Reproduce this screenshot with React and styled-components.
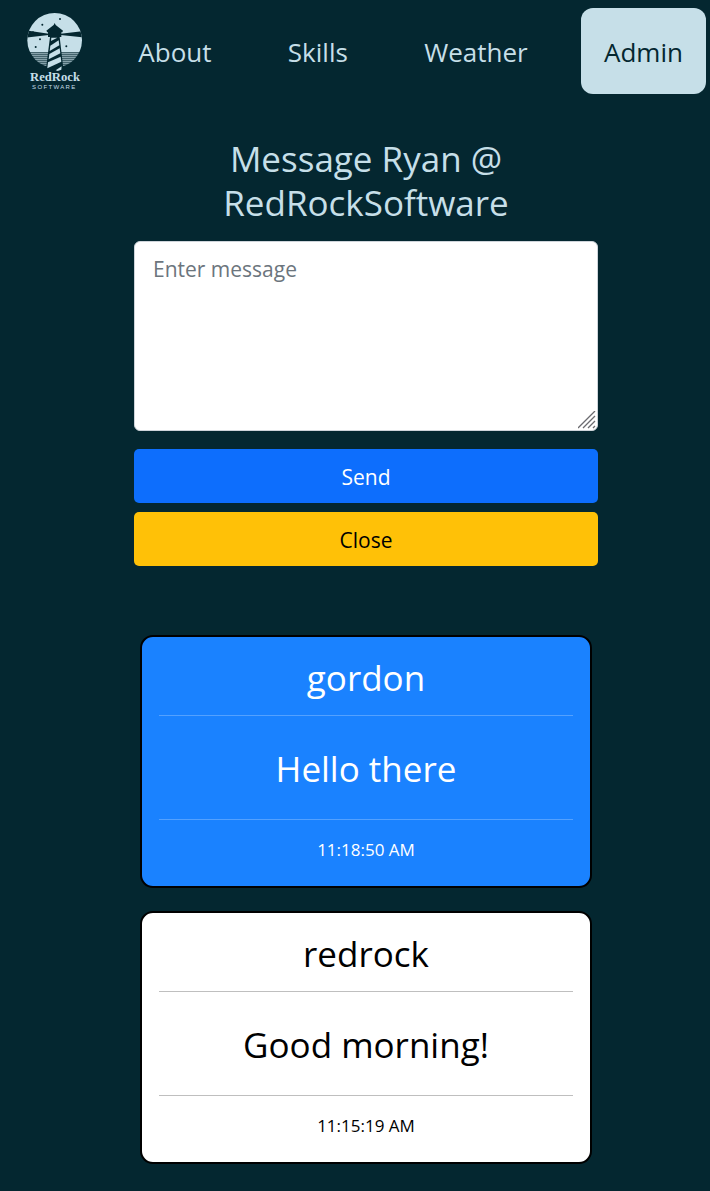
import React from "react";
import styled, { createGlobalStyle } from "styled-components";

const GlobalStyle = createGlobalStyle`
  *, *::before, *::after { box-sizing: border-box; }
  body {
    margin: 0;
    background: #042730;
    color: #c6dfe8;
    font-family: "Open Sans", "Noto Sans", sans-serif;
    font-size: 21px;
  }
`;

const NavBar = styled.nav`
  display: flex;
  align-items: center;
  justify-content: space-between;
  padding: 8px 4px 0 25px;
`;

const NavLink = styled.a`
  display: flex;
  align-items: center;
  height: 86px;
  padding: 2px 23px 0;
  border-radius: 12px;
  font-size: 26px;
  text-decoration: none;
  color: ${(p) => (p.$active ? "#042730" : "#c6dfe8")};
  background: ${(p) => (p.$active ? "#c6dfe8" : "transparent")};
`;

const LogoLink = styled.a`
  display: block;
  width: 60px;
  height: 86px;
`;

const LogoSvg = styled.svg`
  display: block;
  width: 60px;
  height: 86px;
`;

const Main = styled.main`
  padding: 43px 112px 27px 134px;
`;

const Title = styled.h1`
  margin: 0 0 16px;
  font-size: 35px;
  font-weight: 400;
  line-height: 44px;
  text-align: center;
`;

const Form = styled.form`
  display: flex;
  flex-direction: column;
`;

const MessageField = styled.div`
  position: relative;
  display: flex;
  margin-bottom: 18px;
`;

const MessageBox = styled.textarea`
  width: 100%;
  height: 190px;
  padding: 10px 18px;
  border: 1px solid #ced4da;
  border-radius: 6px;
  background: #fff;
  color: #212529;
  font-family: inherit;
  font-size: 21px;
  line-height: 34px;
  resize: none;
  &::placeholder { color: #6c757d; opacity: 1; }
`;

const Grip = styled.svg`
  position: absolute;
  right: 2px;
  bottom: 2px;
  width: 18px;
  height: 18px;
  pointer-events: none;
`;

const Button = styled.button`
  height: 54px;
  margin: 0 0 9px;
  padding: 2px 0 0;
  border: 0;
  border-radius: 5px;
  font-family: inherit;
  font-size: 21px;
  color: ${(p) => (p.$kind === "warning" ? "#000" : "#fff")};
  background: ${(p) => (p.$kind === "warning" ? "#ffc107" : "#0d6efd")};
`;

const Messages = styled.section`
  display: flex;
  flex-direction: column;
  gap: 23px;
  padding: 60px 6px 0;
`;

const Card = styled.article`
  padding: 19px 17px 22px;
  border: 2px solid #000;
  border-radius: 13px;
  text-align: center;
  color: ${(p) => (p.$own ? "#000" : "#fff")};
  background: ${(p) => (p.$own ? "#fff" : "#1a82ff")};
`;

const CardText = styled.p`
  margin: 0;
  font-size: 35px;
  line-height: 44px;
`;

const Rule = styled.hr`
  height: 1px;
  margin: ${(p) => (p.$footer ? "28px 0 16px" : "15px 0 31px")};
  border: 0;
  color: inherit;
  background: currentColor;
  opacity: 0.25;
`;

const Time = styled.time`
  display: block;
  font-size: 17px;
  line-height: 28px;
`;

const links = ["About", "Skills", "Weather", "Admin"];

const messages = [
  { user: "gordon", text: "Hello there", time: "11:18:50 AM", own: false },
  { user: "redrock", text: "Good morning!", time: "11:15:19 AM", own: true },
];

const seaLines = [160, 166, 172, 178, 184, 190, 196, 202, 208];

function Logo() {
  return (
    <LogoSvg viewBox="30 24 180 258" role="img" aria-label="RedRock Software">
      <defs>
        <clipPath id="disc">
          <circle cx="119" cy="121" r="82" />
        </clipPath>
      </defs>
      <g clipPath="url(#disc)">
        <rect x="30" y="36" width="180" height="121" fill="#c6dfe8" />
        {seaLines.map((y) => (
          <rect key={y} x="30" y={y} width="180" height="3" fill="#c6dfe8" />
        ))}
        <g fill="#042730">
          <path d="M30 91 L101 101 V105 L30 113Z" />
          <path d="M210 93 L137 101 V105 L210 113Z" />
        </g>
      </g>
      <g fill="#042730">
        <path d="M119 69 L122 75 L144 92 L142 97 H139 V111 H134 L146 214 H92 L105 111 H99 V97 H97 L94 92 L116 75Z" />
        <circle cx="82" cy="74" r="3" />
        <circle cx="135" cy="57" r="3" />
        <circle cx="75" cy="118" r="3" />
        <circle cx="62" cy="141" r="3" />
        <circle cx="154" cy="139" r="3" />
        <circle cx="54" cy="95" r="2" />
      </g>
      <g fill="#c6dfe8">
        <path d="M109 113 H127 L108 123Z" />
        <path d="M106 137 L131 121 L133 136 L104 153Z" />
        <path d="M103 162 L134 145 L136 160 L101 178Z" />
        <path d="M99 187 L137 170 L139 185 L97 205Z" />
        <path d="M122 211 L140 199 L139 209 L128 213Z" />
      </g>
      <g fill="#c6dfe8" textAnchor="middle">
        <text x="120" y="244" fontFamily="Liberation Serif, serif" fontWeight="700" fontSize="38">RedRock</text>
        <text x="118" y="267" fontFamily="Liberation Sans, sans-serif" fontSize="18" letterSpacing="4">SOFTWARE</text>
      </g>
    </LogoSvg>
  );
}

export default function App() {
  return (
    <>
      <GlobalStyle />
      <NavBar>
        <LogoLink href="#home"><Logo /></LogoLink>
        {links.map((label) => (
          <NavLink key={label} href={`#${label.toLowerCase()}`} $active={label === "Admin"}>
            {label}
          </NavLink>
        ))}
      </NavBar>
      <Main>
        <Title>Message Ryan @ RedRockSoftware</Title>
        <Form onSubmit={(e) => e.preventDefault()}>
          <MessageField>
            <MessageBox aria-label="Message" placeholder="Enter message" />
            <Grip viewBox="0 0 18 18" fill="none" stroke="#6b6b70" strokeWidth="1.3" aria-hidden="true">
              <path d="M0 17 L17 0 M5 17 L17 5 M10 17 L17 10 M15 17 L17 15" />
            </Grip>
          </MessageField>
          <Button type="submit" $kind="primary">Send</Button>
          <Button type="button" $kind="warning">Close</Button>
        </Form>
        <Messages>
          {messages.map((m) => (
            <Card key={m.user} $own={m.own}>
              <CardText>{m.user}</CardText>
              <Rule />
              <CardText>{m.text}</CardText>
              <Rule $footer />
              <Time>{m.time}</Time>
            </Card>
          ))}
        </Messages>
      </Main>
    </>
  );
}
